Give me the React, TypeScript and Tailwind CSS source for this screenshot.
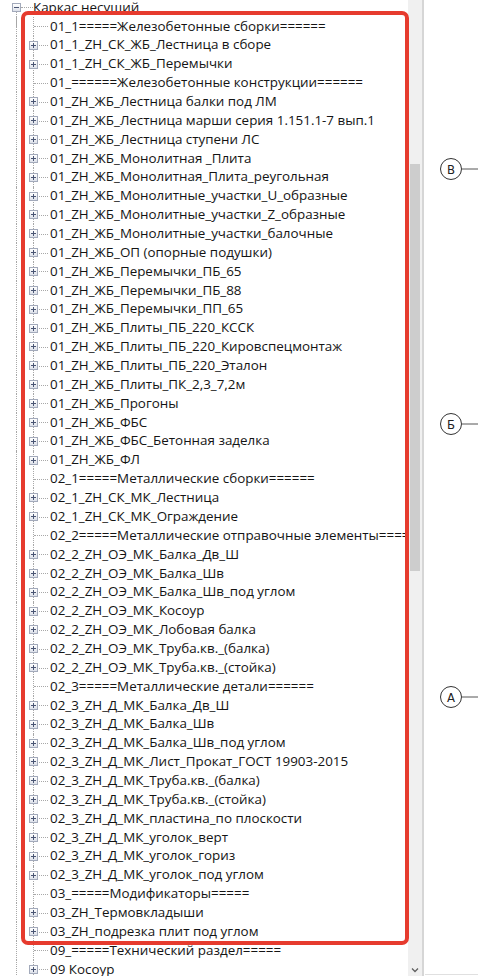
import React from "react";

type Node = { label: string; folder?: boolean };

const children: Node[] = [
  { label: "01_1=====Железобетонные сборки======" },
  { label: "01_1_ZH_СК_ЖБ_Лестница в сборе", folder: true },
  { label: "01_1_ZH_СК_ЖБ_Перемычки", folder: true },
  { label: "01_======Железобетонные конструкции======" },
  { label: "01_ZH_ЖБ_Лестница балки под ЛМ", folder: true },
  { label: "01_ZH_ЖБ_Лестница марши серия 1.151.1-7 вып.1", folder: true },
  { label: "01_ZH_ЖБ_Лестница ступени ЛС", folder: true },
  { label: "01_ZH_ЖБ_Монолитная _Плита", folder: true },
  { label: "01_ZH_ЖБ_Монолитная_Плита_реугольная", folder: true },
  { label: "01_ZH_ЖБ_Монолитные_участки_U_образные", folder: true },
  { label: "01_ZH_ЖБ_Монолитные_участки_Z_образные", folder: true },
  { label: "01_ZH_ЖБ_Монолитные_участки_балочные", folder: true },
  { label: "01_ZH_ЖБ_ОП (опорные подушки)", folder: true },
  { label: "01_ZH_ЖБ_Перемычки_ПБ_65", folder: true },
  { label: "01_ZH_ЖБ_Перемычки_ПБ_88", folder: true },
  { label: "01_ZH_ЖБ_Перемычки_ПП_65", folder: true },
  { label: "01_ZH_ЖБ_Плиты_ПБ_220_КССК", folder: true },
  { label: "01_ZH_ЖБ_Плиты_ПБ_220_Кировспецмонтаж", folder: true },
  { label: "01_ZH_ЖБ_Плиты_ПБ_220_Эталон", folder: true },
  { label: "01_ZH_ЖБ_Плиты_ПК_2,3_7,2м", folder: true },
  { label: "01_ZH_ЖБ_Прогоны", folder: true },
  { label: "01_ZH_ЖБ_ФБС", folder: true },
  { label: "01_ZH_ЖБ_ФБС_Бетонная заделка", folder: true },
  { label: "01_ZH_ЖБ_ФЛ", folder: true },
  { label: "02_1=====Металлические сборки======" },
  { label: "02_1_ZH_СК_МК_Лестница", folder: true },
  { label: "02_1_ZH_СК_МК_Ограждение", folder: true },
  { label: "02_2=====Металлические отправочные элементы======" },
  { label: "02_2_ZH_ОЭ_МК_Балка_Дв_Ш", folder: true },
  { label: "02_2_ZH_ОЭ_МК_Балка_Шв", folder: true },
  { label: "02_2_ZH_ОЭ_МК_Балка_Шв_под углом", folder: true },
  { label: "02_2_ZH_ОЭ_МК_Косоур", folder: true },
  { label: "02_2_ZH_ОЭ_МК_Лобовая балка", folder: true },
  { label: "02_2_ZH_ОЭ_МК_Труба.кв._(балка)", folder: true },
  { label: "02_2_ZH_ОЭ_МК_Труба.кв._(стойка)", folder: true },
  { label: "02_3=====Металлические детали======" },
  { label: "02_3_ZH_Д_МК_Балка_Дв_Ш", folder: true },
  { label: "02_3_ZH_Д_МК_Балка_Шв", folder: true },
  { label: "02_3_ZH_Д_МК_Балка_Шв_под углом", folder: true },
  { label: "02_3_ZH_Д_МК_Лист_Прокат_ГОСТ 19903-2015", folder: true },
  { label: "02_3_ZH_Д_МК_Труба.кв._(балка)", folder: true },
  { label: "02_3_ZH_Д_МК_Труба.кв._(стойка)", folder: true },
  { label: "02_3_ZH_Д_МК_пластина_по плоскости", folder: true },
  { label: "02_3_ZH_Д_МК_уголок_верт", folder: true },
  { label: "02_3_ZH_Д_МК_уголок_гориз", folder: true },
  { label: "02_3_ZH_Д_МК_уголок_под углом", folder: true },
  { label: "03_=====Модификаторы=====" },
  { label: "03_ZH_Термовкладыши", folder: true },
  { label: "03_ZH_подрезка плит под углом", folder: true },
  { label: "09_=====Технический раздел=====" },
  { label: "09 Косоур", folder: true },
];

function Expander({ open }: { open?: boolean }) {
  return (
    <span className="relative block w-[9px] h-[9px] border border-[#a3aabb] bg-gradient-to-b from-white to-[#dde1ea]">
      <span className="absolute left-[1px] top-[3px] w-[5px] h-px bg-[#4a5573]" />
      {!open && <span className="absolute left-[3px] top-[1px] w-px h-[5px] bg-[#4a5573]" />}
    </span>
  );
}

function Row({ node }: { node: Node }) {
  return (
    <div className="flex h-[18.86px]">
      <div className="shrink-0 ml-[16px] w-[17px] h-full border-l border-dotted border-[#a8a8a8]" />
      <div className="shrink-0 relative w-[16px] h-full border-l border-dotted border-[#a8a8a8]">
        <div className="absolute left-0 top-1/2 w-[14px] border-t border-dotted border-[#a8a8a8]" />
        {node.folder && (
          <div className="absolute left-[-5px] top-[5px] bg-white">
            <Expander />
          </div>
        )}
      </div>
      <span className="shrink-0 ml-[1px] self-center whitespace-nowrap leading-none">{node.label}</span>
    </div>
  );
}

export default function App() {
  return (
    <div className="relative flex w-[478px] h-[976px] overflow-hidden bg-white">
      {/* family tree */}
      <div
        className="shrink-0 w-[408px] h-full overflow-hidden text-[13.4px] text-[#141414]"
        style={{ fontFamily: '"Open Sans", "Noto Sans", sans-serif' }}
      >
        <div className="mt-[-2px]">
          <div className="flex h-[18.86px] items-center">
            <div className="relative ml-[12px] w-[9px] h-full">
              <div className="absolute left-[4px] top-1/2 h-[20px] border-l border-dotted border-[#a8a8a8]" />
              <div className="absolute left-0 top-[5px] bg-white">
                <Expander open />
              </div>
            </div>
            <div className="w-[12px] border-t border-dotted border-[#a8a8a8]" />
            <span className="whitespace-nowrap leading-none">Каркас несущий</span>
          </div>
          {children.map((n, i) => (
            <Row key={i} node={n} />
          ))}
        </div>
      </div>

      {/* scrollbar */}
      <div className="shrink-0 relative w-[14px] h-full bg-[#f0f0f0]">
        <div className="absolute left-[2px] top-[164px] w-[10px] h-[407px] bg-[#cdcdcd]" />
        <svg className="absolute left-[3px] bottom-[3px]" width="8" height="6" viewBox="0 0 8 6">
          <path d="M1 1.5 L4 4.5 L7 1.5" fill="none" stroke="#606060" strokeWidth="1.3" />
        </svg>
      </div>
      <div className="shrink-0 w-[2px] h-full bg-[#d6d6d6]" />

      {/* drawing: grid axis markers */}
      <div className="flex-1 h-full">
        <svg width="54" height="976" viewBox="0 0 54 976" className="block">
          {[
            { y: 169, t: "B" },
            { y: 424, t: "Б" },
            { y: 697, t: "A" },
          ].map((m) => (
            <g key={m.t}>
              <circle cx="27" cy={m.y} r="10.5" fill="white" stroke="#333" strokeWidth="1" />
              <line x1="37.5" y1={m.y} x2="54" y2={m.y} stroke="#555" strokeWidth="1" />
              <text
                x="27"
                y={m.y + 4.5}
                textAnchor="middle"
                fontSize="13"
                fill="#222"
                fontFamily='"DejaVu Sans Condensed", "Liberation Sans Narrow", sans-serif'
              >
                {m.t}
              </text>
            </g>
          ))}
          <line x1="1" y1="974.5" x2="54" y2="974.5" stroke="#e0e0e0" strokeWidth="1" />
        </svg>
      </div>

      {/* highlight frame */}
      <div className="pointer-events-none absolute left-[21px] top-[11px] w-[388px] h-[934px] rounded-[7px] border-4 border-[#e63b2e]" />
    </div>
  );
}
